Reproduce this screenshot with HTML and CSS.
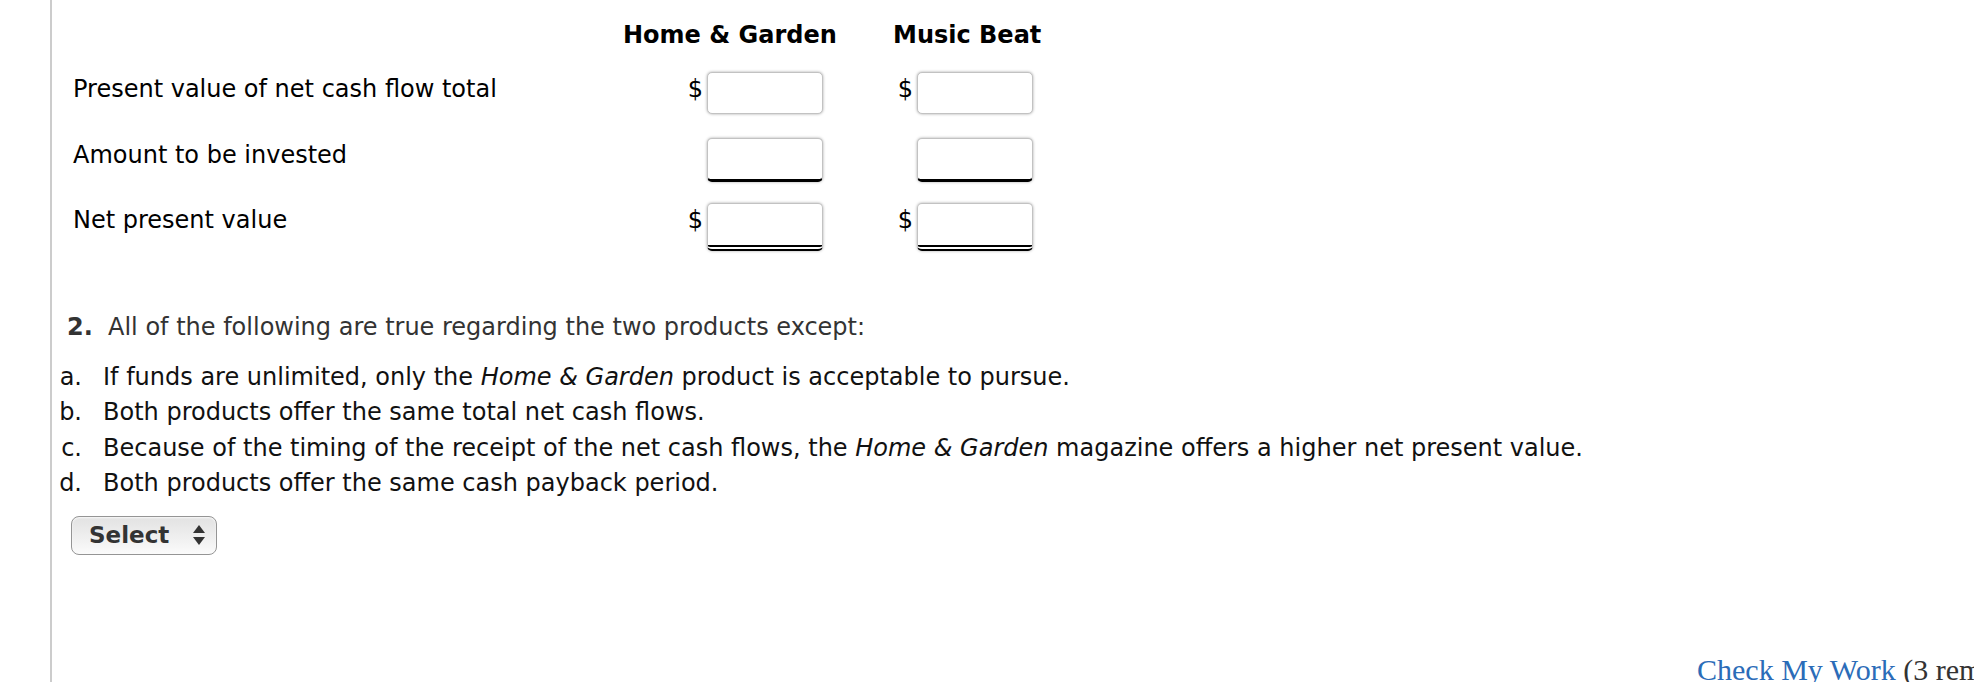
FILE: index.html
```html
<!DOCTYPE html>
<html lang="en">
<head>
<meta charset="utf-8">
<title>Net present value</title>
<link rel="stylesheet" href="styles.css">
</head>
<body>
<div class="page">
  <div class="npv-grid">
    <div class="th th-hg">Home &amp; Garden</div>
    <div class="th th-mb">Music Beat</div>

    <div class="lbl">Present value of net cash flow total</div>
    <div class="cell cell-hg"><span class="cur">$</span><span class="box"></span></div>
    <div class="cell cell-mb"><span class="cur">$</span><span class="box"></span></div>

    <div class="lbl">Amount to be invested</div>
    <div class="cell cell-hg"><span class="box single"></span></div>
    <div class="cell cell-mb"><span class="box single"></span></div>

    <div class="lbl">Net present value</div>
    <div class="cell cell-hg"><span class="cur">$</span><span class="box double"></span></div>
    <div class="cell cell-mb"><span class="cur">$</span><span class="box double"></span></div>
  </div>

  <p class="question"><span class="qnum">2.</span>All of the following are true regarding the two products except:</p>
  <ol class="opts">
    <li><span class="mk">a.</span><span>If funds are unlimited, only the <em>Home &amp; Garden</em> product is acceptable to pursue.</span></li>
    <li><span class="mk">b.</span><span>Both products offer the same total net cash flows.</span></li>
    <li><span class="mk">c.</span><span>Because of the timing of the receipt of the net cash flows, the <em>Home &amp; Garden</em> magazine offers a higher net present value.</span></li>
    <li><span class="mk">d.</span><span>Both products offer the same cash payback period.</span></li>
  </ol>

  <div class="select">
    <span class="select-text">Select</span>
    <svg class="arrows" width="12" height="20" viewBox="0 0 12 20" aria-hidden="true">
      <polygon points="6,0 12,8 0,8" fill="#333"/>
      <polygon points="0,12 12,12 6,20" fill="#333"/>
    </svg>
  </div>

  <div class="footer"><a class="check" href="#">Check My Work</a> <span class="remain">(3 remaining)</span></div>
</div>
</body>
</html>
```

FILE: styles.css
```css
html, body {
  margin: 0;
  padding: 0;
  background: #fff;
}
body {
  width: 1974px;
  height: 682px;
  overflow: hidden;
  font-family: "DejaVu Sans", Verdana, sans-serif;
  font-size: 24px;
  color: #000;
}
.page {
  margin-left: 50px;
  border-left: 2px solid #cccccc;
  height: 682px;
  box-sizing: border-box;
}
.npv-grid {
  display: grid;
  grid-template-columns: 550px 210px 60px 144px;
  grid-template-rows: 50px 65.5px 65.5px 65.5px;
  margin-left: 21px;
  padding-top: 22px;
}
.th {
  font-weight: bold;
  line-height: 27px;
  white-space: nowrap;
}
.th-hg { grid-column: 2; }
.th-mb { grid-column: 4; }
.lbl {
  grid-column: 1;
  padding-top: 4px;
  line-height: 27px;
  white-space: nowrap;
}
.cell {
  display: flex;
  align-items: flex-start;
  justify-self: end;
}
.cell-hg { grid-column: 2; margin-right: 10px; }
.cell-mb { grid-column: 4; margin-right: 4px; }
.cur {
  padding-top: 4px;
  line-height: 27px;
  margin-right: 4px;
}
.box {
  display: block;
  width: 116px;
  height: 42px;
  box-sizing: border-box;
  border: 1px solid #c2c2c2;
  border-radius: 5px;
  background: #fff;
  box-shadow: 0 0 3px rgba(0, 0, 0, 0.35);
}
.box.single {
  height: 44px;
  border-bottom: 3px solid #000;
}
.box.double {
  height: 48px;
  border-bottom: 6px double #000;
}
.question {
  margin: 41px 0 0 15px;
  line-height: 35px;
  color: #333;
  white-space: nowrap;
}
.qnum {
  display: inline-block;
  width: 41px;
  font-weight: bold;
}
.opts {
  list-style: none;
  margin: 15px 0 0;
  padding: 0;
  line-height: 35.5px;
  color: #111;
}
.opts li {
  display: flex;
  white-space: nowrap;
}
.mk {
  width: 30px;
  margin-right: 21px;
  text-align: right;
  flex: none;
}
.select {
  display: flex;
  align-items: center;
  justify-content: space-between;
  width: 146px;
  height: 39px;
  box-sizing: border-box;
  margin: 14px 0 0 19px;
  padding: 0 11px 0 17px;
  border: 1px solid #959595;
  border-radius: 8px;
  background: linear-gradient(to bottom, #e2e2e2 0%, #efefef 55%, #fbfbfb 100%);
  box-shadow: inset 0 1px 2px rgba(255, 255, 255, 0.8);
}
.select-text {
  font-weight: bold;
  font-size: 23px;
  color: #333;
  line-height: 27px;
}
.arrows {
  display: block;
}
.footer {
  margin-top: 100px;
  padding-left: 1645px;
  white-space: nowrap;
  font-family: "Liberation Serif", "Times New Roman", serif;
  font-size: 30px;
  line-height: 30px;
  color: #333;
}
.check {
  color: #2b6cb8;
  text-decoration: none;
}
```
